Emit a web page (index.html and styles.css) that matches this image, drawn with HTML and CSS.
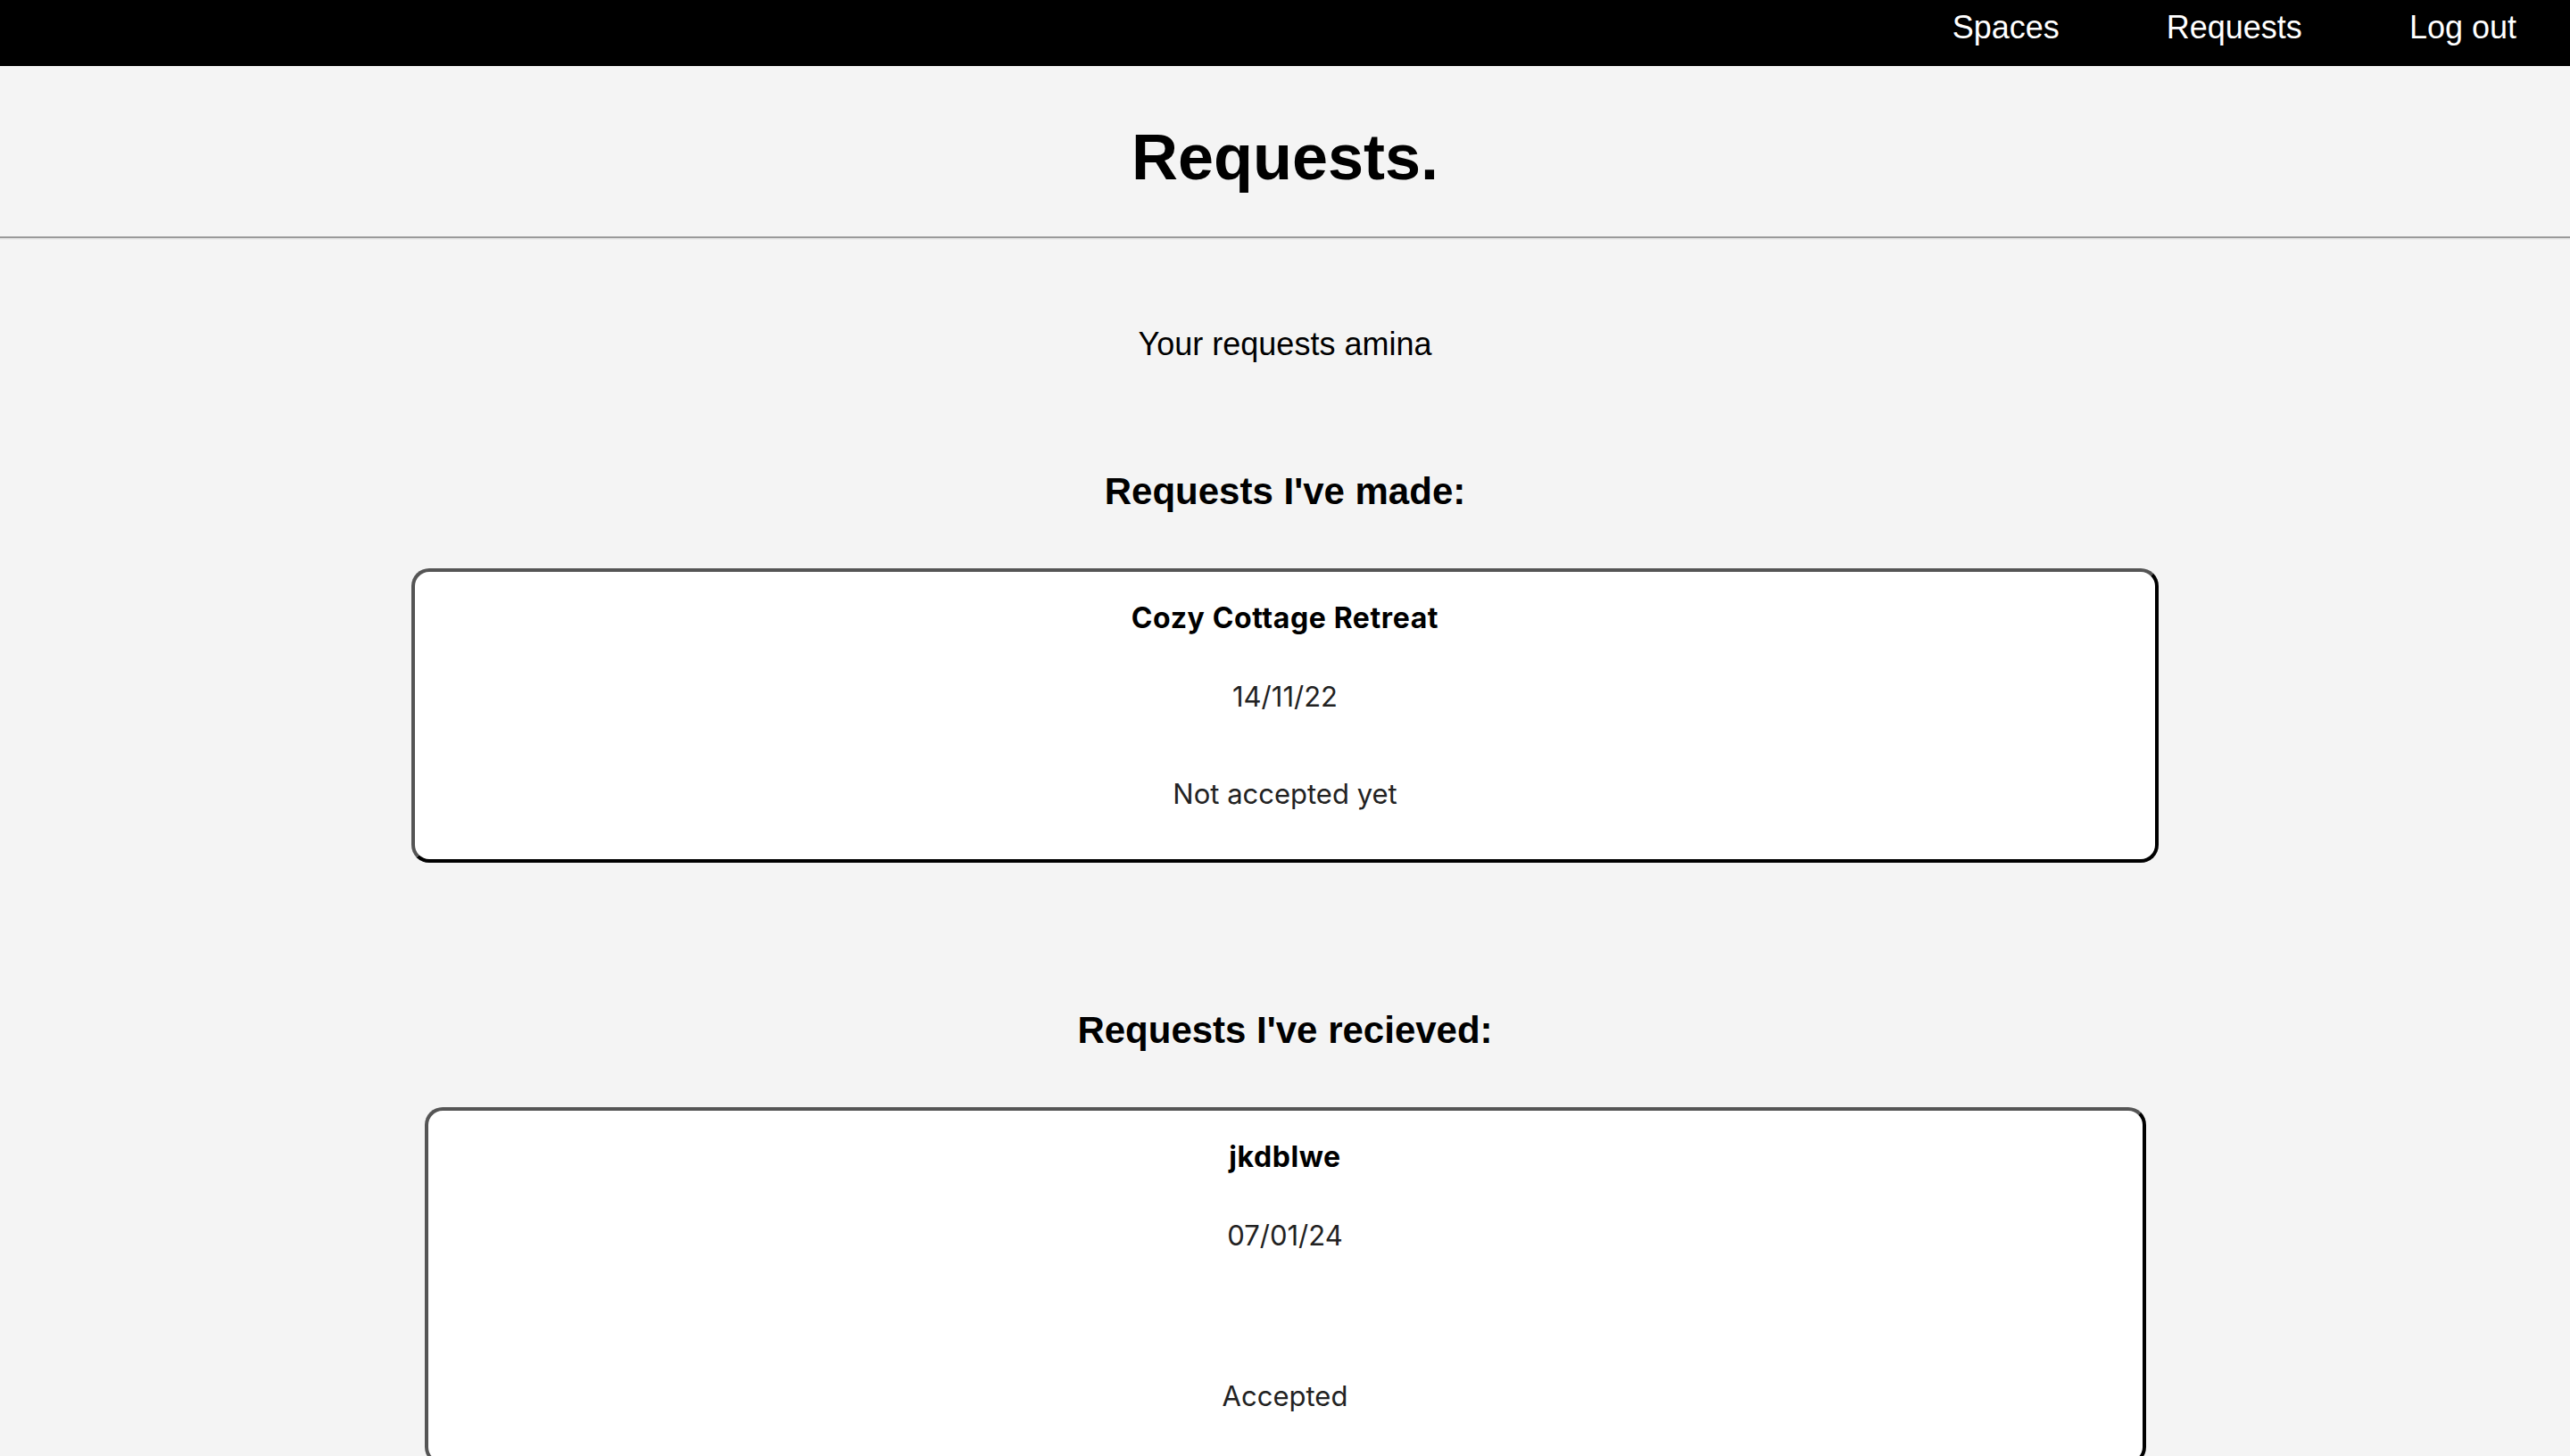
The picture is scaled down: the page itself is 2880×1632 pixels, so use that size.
FILE: index.html
```html
<!DOCTYPE html>
<html lang="en">
<head>
<meta charset="utf-8">
<title>Requests</title>
<link rel="stylesheet" href="styles.css">
</head>
<body>
<nav class="topnav">
  <a class="topnav__link" href="#">Spaces</a>
  <a class="topnav__link" href="#">Requests</a>
  <a class="topnav__link" href="#">Log out</a>
</nav>
<header class="page-header">
  <h1 class="page-title">Requests.</h1>
</header>
<hr class="divider">
<main class="content">
  <p class="greeting">Your requests amina</p>

  <h3 class="section-title section-title--first">Requests I've made:</h3>
  <div class="card card--wide">
    <p class="card__title">Cozy Cottage Retreat</p>
    <p class="card__date">14/11/22</p>
    <p class="card__status">Not accepted yet</p>
  </div>

  <h3 class="section-title">Requests I've recieved:</h3>
  <div class="card card--narrow">
    <p class="card__title">jkdblwe</p>
    <p class="card__date">07/01/24</p>
    <div class="card__spacer"></div>
    <p class="card__status">Accepted</p>
  </div>
</main>
</body>
</html>
```
FILE: styles.css
```css
html, body {
  margin: 0;
  padding: 0;
}
body {
  background: #f4f4f4;
  font-family: "Liberation Sans", Arial, sans-serif;
  color: #000;
  min-height: 1632px;
}
.topnav {
  height: 74px;
  box-sizing: border-box;
  background: #000;
  display: flex;
  justify-content: flex-end;
  align-items: flex-start;
  padding: 10px 0 0;
}
.topnav__link {
  color: #fff;
  text-decoration: none;
  font-size: 36px;
  line-height: normal;
  padding: 0 60px;
}
.page-header {
  display: flex;
  justify-content: center;
}
.page-title {
  margin: 61px 0 48px;
  font-size: 72px;
  font-weight: bold;
  line-height: normal;
}
.divider {
  margin: 0;
  border: 0;
  border-top: 2px solid #999;
  border-bottom: 2px solid #ececec;
  height: 0;
}
.content {
  display: flex;
  flex-direction: column;
  align-items: center;
  text-align: center;
}
.greeting {
  margin: 96px 0 0;
  font-size: 36px;
  line-height: normal;
}
.section-title {
  margin: 164px 0 62px;
  font-size: 42px;
  font-weight: bold;
  line-height: normal;
}
.section-title--first {
  margin-top: 120px;
  margin-bottom: 62px;
}
.card {
  box-sizing: border-box;
  background: #fff;
  border: 4px solid;
  border-color: #555 #000 #000 #555;
  border-radius: 20px;
  padding: 32px 0 53px;
  display: flex;
  flex-direction: column;
  align-items: center;
  font-family: Inter, "Noto Sans", sans-serif;
  font-size: 31px;
  line-height: 40px;
  color: #222;
}
.card--wide {
  width: 1958px;
}
.card--narrow {
  width: 1929px;
}
.card p {
  margin: 0;
}
.card__title {
  font-weight: bold;
  color: #000;
  font-size: 32px;
  letter-spacing: 0.6px;
}
.card .card__title {
  margin-bottom: 48px;
}
.card .card__date {
  margin-bottom: 69px;
}
.card__spacer {
  height: 71px;
}
```
